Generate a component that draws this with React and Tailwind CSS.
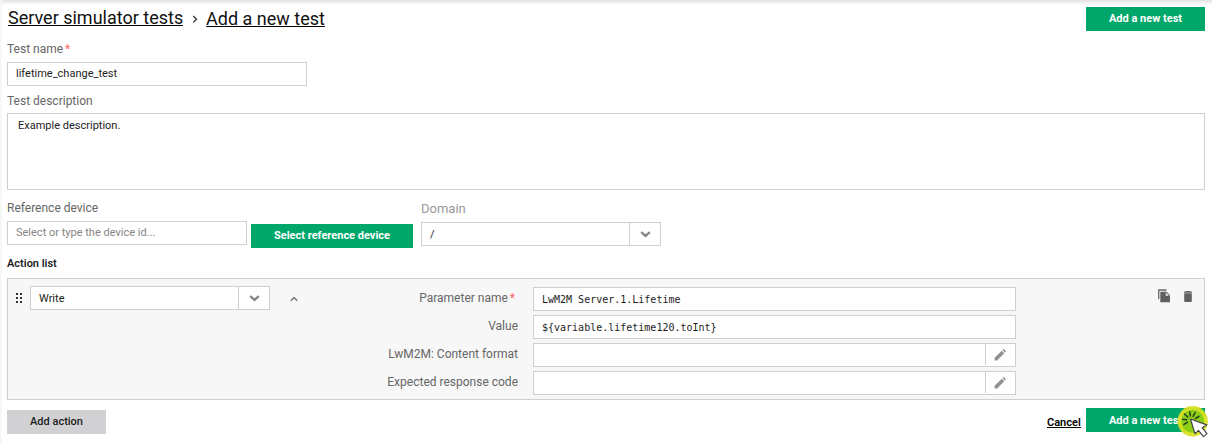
import React from 'react';

const Chevron = () => (
  <svg width="11" height="7" viewBox="0 0 11 7" fill="none" className="mt-px">
    <path d="M1.2 1.2 5.5 4.9 9.8 1.2" stroke="#858585" strokeWidth="2.3" />
  </svg>
);

const Pencil = () => (
  <svg width="12" height="12" viewBox="0 0 12 12" fill="#929292">
    <path d="M.6 11.4V8.8L7.8 1.7l2.5 2.5-7.1 7.2zM8.5 1.1l.8-.8q.4-.4.8 0l1.6 1.6q.4.4 0 .8l-.8.8z" />
  </svg>
);

const Label = ({ children, className = 'text-[12px] text-[#666]' }) => (
  <div className={`leading-4 whitespace-nowrap ${className}`}>{children}</div>
);

const Star = () => <span className="ml-[2px] text-[#f66]">*</span>;

const Select = ({ value, className = '' }) => (
  <div className={`flex h-6 w-60 border border-[#cfcfcf] bg-white text-[11px] leading-[23px] ${className}`}>
    <div className="flex-1 pl-2">{value}</div>
    <div className="flex w-[31px] items-center justify-center border-l border-[#cfcfcf]">
      <Chevron />
    </div>
  </div>
);

const GreenButton = ({ children, className = '' }) => (
  <button className={`block h-6 bg-[#00a76a] text-center text-[11px] leading-6 font-bold whitespace-nowrap text-white ${className}`}>
    {children}
  </button>
);

const ParamRow = ({ label, required, value, editable }) => (
  <div className="flex h-6">
    <Label className="mt-[3px] w-[148px] text-right text-[12px] text-[#666]">
      {label}
      {required && <span className="mr-[3px]"><Star /></span>}
    </Label>
    <div className="ml-[15px] flex h-6 w-[483px] border border-[#cfcfcf] bg-white">
      <div className="flex-1 pl-2 font-['DejaVu_Sans_Mono',monospace] text-[10px] leading-[23px] whitespace-pre">{value}</div>
      {editable && (
        <div className="flex h-[21px] w-[30px] items-center justify-center border-l border-[#cfcfcf] pr-px pt-px">
          <Pencil />
        </div>
      )}
    </div>
  </div>
);

const Grip = () => (
  <svg width="6" height="10" viewBox="0 0 6 10" fill="#333">
    {[0, 4].map((x) => [0, 4, 8].map((y) => <rect key={`${x}-${y}`} x={x} y={y} width="2" height="2" />))}
  </svg>
);

const Copy = () => (
  <svg width="12" height="14" viewBox="0 0 12 14">
    <path d="M.7 10V1H8.5" fill="none" stroke="#666" strokeWidth="1.3" />
    <path d="M3 2.7h5.5L12 6.2V13.2H2.3V3.4q0-.7.7-.7z" fill="#5f5f5f" />
    <path d="M7.8 3.6v3.1H11z" fill="#f7f7f7" />
  </svg>
);

const Trash = () => (
  <svg width="8" height="11" viewBox="0 0 8 11" fill="#606060">
    <path d="M0 .6h2L2.5 0h3L6 .6h2v1.2H0zM.2 2.2h7.6V10q0 1-1 1H1.2q-1 0-1-1z" />
  </svg>
);

const ClickPointer = () => (
  <svg width="34" height="36" viewBox="0 0 34 36" className="absolute -top-[4px] left-[90px]">
    <circle cx="16.7" cy="17.3" r="15.2" fill="#d8df20" fillOpacity=".92" />
    <circle cx="16.7" cy="17.3" r="12.2" fill="#8fce18" stroke="#f0ec28" strokeWidth="1" />
    <path d="m8 9.5 4.2 4M13.6 7.3l.9 5.2M19.4 8.2l-2.6 4.6M6 15.2l5.2.5M7.4 20.8l4.4-3M23.5 12l-4.6 2.8" stroke="#26401c" strokeWidth="1.5" fill="none" />
    <path d="m14.5 15 4.5 14.8 3.5-3.4 5 6.2 3.5-3-4.8-5.8 4.6-2.9z" fill="#fff" stroke="#444" strokeWidth="1.2" strokeLinejoin="round" />
  </svg>
);

export default function App() {
  return (
    <div className="h-[444px] w-[1212px] overflow-hidden border-l-2 border-[#f7f7f7] bg-white bg-[linear-gradient(#e2e2e2,#ffffff_5px)] bg-no-repeat pr-[7px] pl-[5px] font-['Roboto',sans-serif] text-[#1d1d1d]">
      <header className="flex h-[41px] justify-between pt-[7px]">
        <div className="flex pl-px text-[18px] leading-[22px] text-[#111]">
          <a className="h-[19px] w-[175px] border-b border-black whitespace-nowrap">Server simulator tests</a>
          <svg width="23" height="20" viewBox="0 0 23 20" fill="none">
            <path d="m10.3 9 3.2 3.2-3.2 3.2" stroke="#333" strokeWidth="1.3" />
          </svg>
          <a className="mt-px h-[19px] w-[119px] border-b border-black whitespace-nowrap">Add a new test</a>
        </div>
        <GreenButton className="w-[119px]">Add a new test</GreenButton>
      </header>

      <Label className="h-[21px] text-[12px] text-[#666]">Test name<Star /></Label>
      <div className="h-6 w-[300px] border border-[#cfcfcf] bg-white pl-2 text-[11px] leading-[21px]">lifetime_change_test</div>

      <Label className="mt-[7px] h-5 text-[12px] text-[#666]">Test description</Label>
      <div className="h-[77px] border border-[#cfcfcf] bg-white pt-1 pl-[10px] text-[11px] leading-4">Example description.</div>

      <div className="flex h-[67px] pt-[10px]">
        <div className="w-60">
          <Label className="h-[21px] text-[12px] text-[#666]">Reference device</Label>
          <div className="h-6 border border-[#cfcfcf] pl-2 text-[11px] leading-[21px] text-[#858585]">Select or type the device id...</div>
        </div>
        <GreenButton className="mt-6 ml-1 w-[162px]">Select reference device</GreenButton>
        <div className="ml-2 pt-px">
          <Label className="h-[21px] text-[13px] text-[#999]">Domain</Label>
          <Select value="/" />
        </div>
      </div>

      <div className="h-[21px] text-[11px] leading-[13px] font-semibold">Action list</div>

      <section className="flex h-[122px] border border-[#cfcfcf] bg-[#f7f7f7]">
        <div className="mt-[14px] ml-2 w-[14px]"><Grip /></div>
        <Select value="Write" className="mt-[7px]" />
        <svg width="8" height="6" viewBox="0 0 8 6" fill="none" className="mt-[17px] ml-5">
          <path d="M.8 4.8 4 1.6l3.2 3.2" stroke="#666" strokeWidth="1.3" />
        </svg>
        <div className="mt-2 ml-[72px] flex flex-col gap-1">
          <ParamRow label="Parameter name" required value="LwM2M Server.1.Lifetime" />
          <ParamRow label="Value" value="${variable.lifetime120.toInt}" />
          <ParamRow label="LwM2M: Content format" editable />
          <ParamRow label="Expected response code" editable />
        </div>
        <div className="mt-[10px] ml-[142px]"><Copy /></div>
        <div className="mt-3 ml-[14px]"><Trash /></div>
      </section>

      <footer className="flex justify-between pt-2">
        <button className="mt-[2px] h-6 w-[99px] bg-[#d1d1d3] text-[11px] font-medium leading-6">Add action</button>
        <div className="flex">
          <a className="mt-[9px] mr-[5px] h-[11px] w-[34px] border-b border-black text-[11px] leading-[11px] font-semibold whitespace-nowrap text-black">Cancel</a>
          <div className="relative">
            <GreenButton className="w-[119px]"><span className="relative top-px">Add a new test</span></GreenButton>
            <ClickPointer />
          </div>
        </div>
      </footer>
    </div>
  );
}
